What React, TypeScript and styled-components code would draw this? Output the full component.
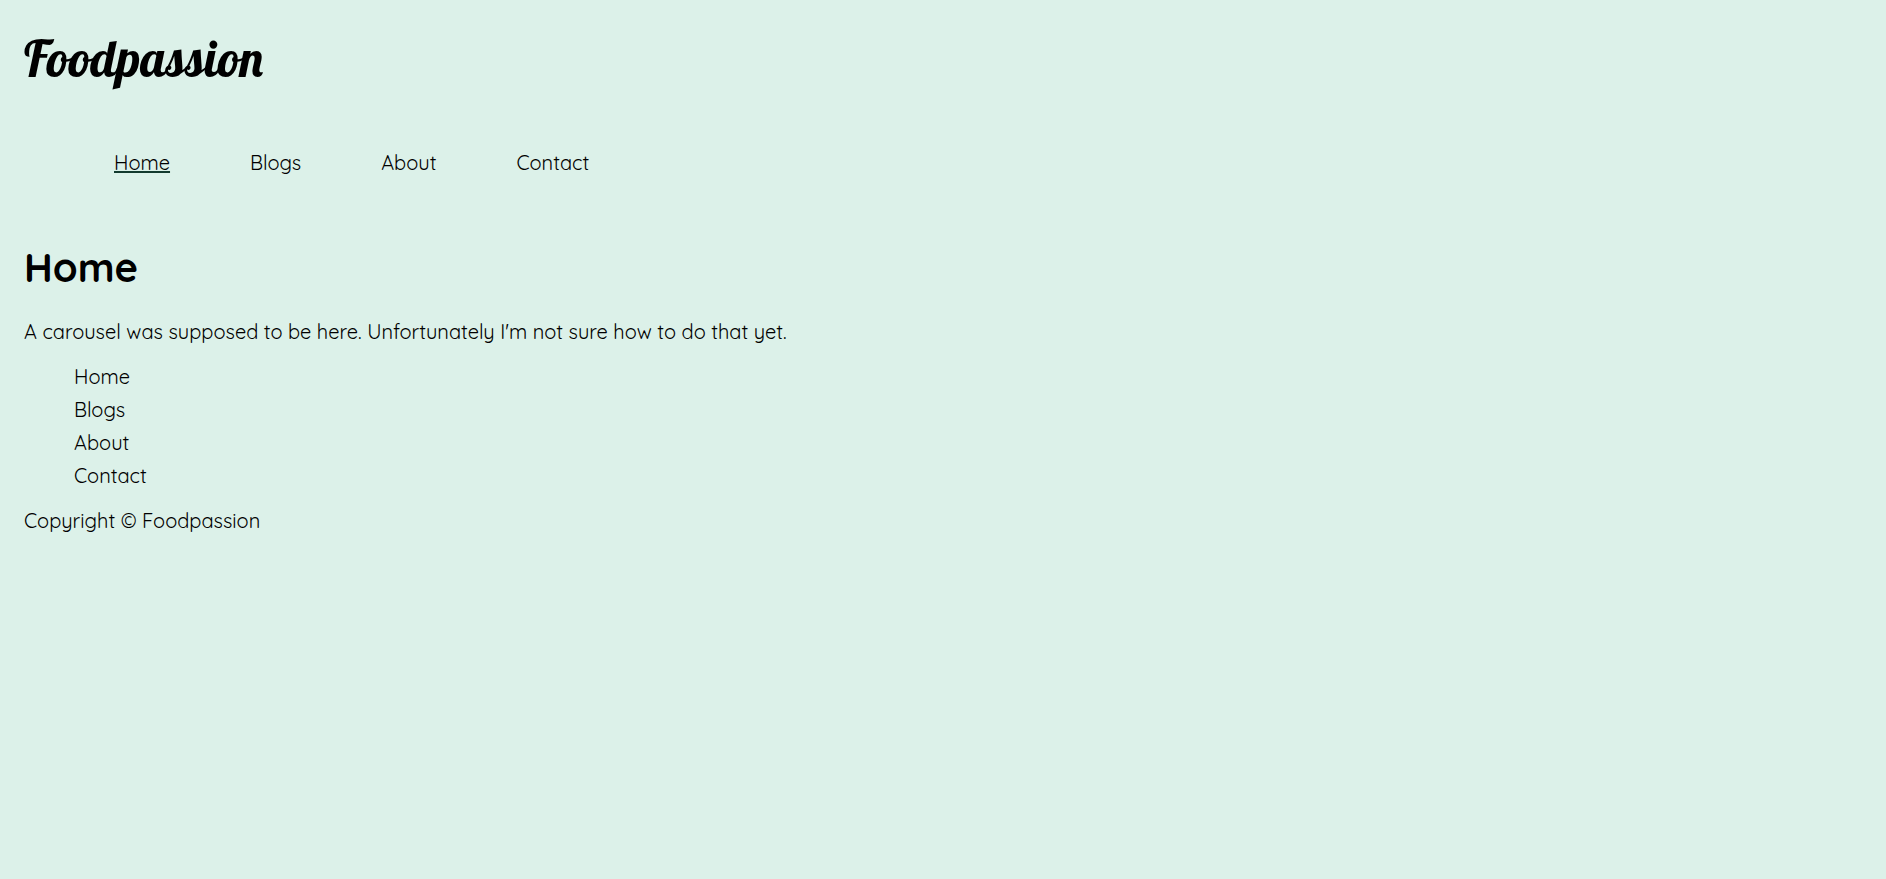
import React from 'react';
import styled, { createGlobalStyle } from 'styled-components';

const GlobalStyle = createGlobalStyle`
  *, *::before, *::after {
    box-sizing: border-box;
  }

  body {
    margin: 0;
    background: #dcf1e9;
    color: #000;
    font-family: Quicksand, Inter, sans-serif;
    font-size: 20px;
    font-weight: 400;
    line-height: 33px;
  }
`;

const Page = styled.div`
  min-height: 100vh;
  padding: 24px;
`;

const Logo = styled.div`
  font-family: Lobster, 'Liberation Serif', serif;
  font-size: 50px;
  font-weight: 400;
  line-height: 70px;
`;

const NavList = styled.ul`
  display: flex;
  flex-wrap: wrap;
  gap: 80px;
  margin: 0;
  padding: 52px 90px 50px;
  list-style: none;
`;

const FooterList = styled.ul`
  margin: 12px 0;
  padding: 0 0 0 50px;
  list-style: none;
`;

const PageLink = styled.a<{ $active?: boolean }>`
  color: inherit;
  text-decoration: ${({ $active }) => ($active ? 'underline 2px #123a2e' : 'none')};
`;

const Title = styled.h1`
  margin: 0 0 10px;
  font-size: 40px;
  font-weight: 700;
  line-height: 76px;
`;

const Text = styled.p`
  margin: 0;
`;

const links = [
  { label: 'Home', href: '#home' },
  { label: 'Blogs', href: '#blogs' },
  { label: 'About', href: '#about' },
  { label: 'Contact', href: '#contact' },
];

export default function App() {
  return (
    <>
      <GlobalStyle />
      <Page>
        <header>
          <Logo>Foodpassion</Logo>
          <nav>
            <NavList>
              {links.map(({ label, href }) => (
                <li key={href}>
                  <PageLink href={href} $active={label === 'Home'}>
                    {label}
                  </PageLink>
                </li>
              ))}
            </NavList>
          </nav>
        </header>
        <main>
          <Title>Home</Title>
          <Text>
            A carousel was supposed to be here. Unfortunately I'm not sure how to do that yet.
          </Text>
        </main>
        <footer>
          <FooterList>
            {links.map(({ label, href }) => (
              <li key={href}>
                <PageLink href={href}>{label}</PageLink>
              </li>
            ))}
          </FooterList>
          <Text>Copyright © Foodpassion</Text>
        </footer>
      </Page>
    </>
  );
}
